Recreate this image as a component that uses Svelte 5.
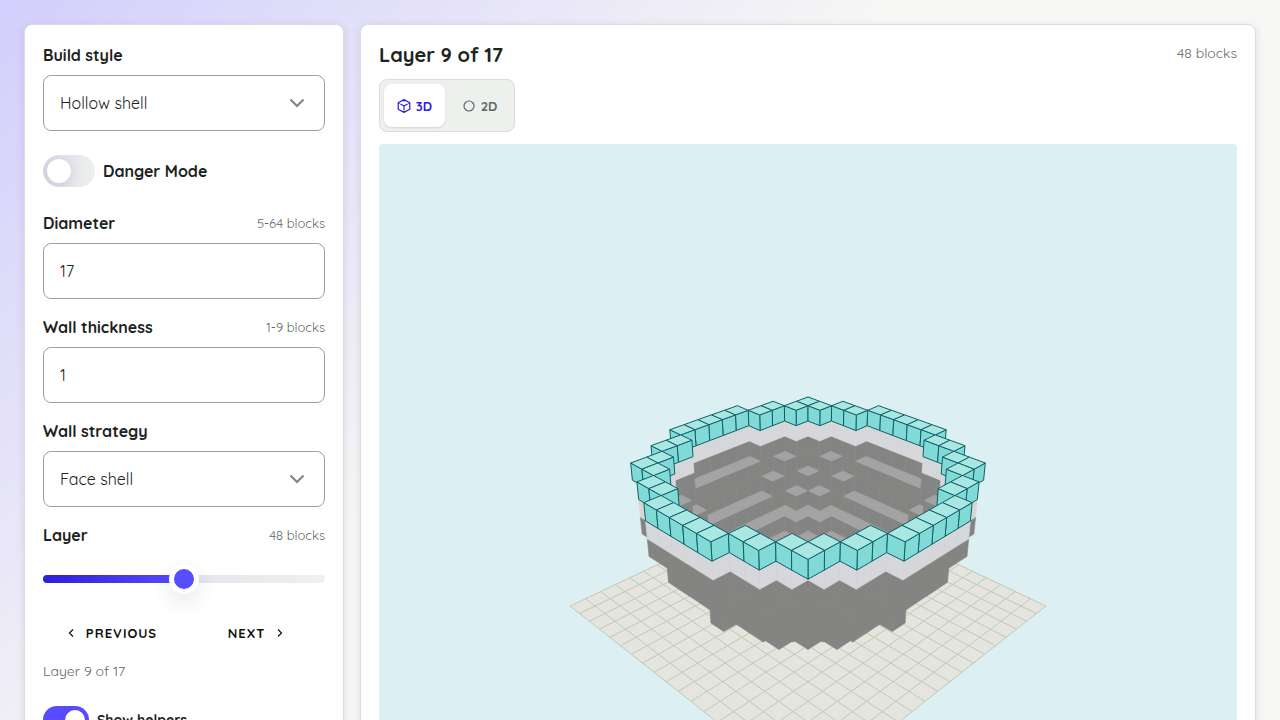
<script lang="ts">
  type Point = [number, number];
  interface Face {
    kind: string;
    points: string;
  }

  let buildStyle = $state('Hollow shell');
  let strategy = $state('Face shell');
  let danger = $state(false);
  let helpers = $state(true);
  let diameter = $state(17);
  let thickness = $state(1);
  let layer = $state(9);
  let view = $state('3D');

  // camera for the preview, in block units around the sphere centre
  const focal = 855;
  const distance = 44.29;
  const pitch = 0.4568;
  const center: Point = [429, 318];

  let radius = $derived(diameter / 2);
  let fill = $derived(((layer - 1) / (diameter - 1)) * 100);

  function project(x: number, y: number, z: number): Point {
    const u = (x - z) * Math.SQRT1_2;
    const w = -(x + z) * Math.SQRT1_2;
    const h = y - 0.56;
    const depth = distance + w * Math.cos(pitch) - h * Math.sin(pitch);
    return [
      center[0] + (focal * u) / depth,
      center[1] - (focal * (w * Math.sin(pitch) + h * Math.cos(pitch))) / depth
    ];
  }

  function toPoints(corners: number[][]) {
    return corners
      .map(([x, y, z]) => project(x, y, z).map((v) => v.toFixed(1)).join(','))
      .join(' ');
  }

  function inside(x: number, y: number, z: number) {
    return x * x + y * y + z * z <= radius * radius;
  }

  function isShell(x: number, y: number, z: number) {
    if (!inside(x, y, z)) return false;
    return !(
      inside(x + 1, y, z) && inside(x - 1, y, z) &&
      inside(x, y + 1, z) && inside(x, y - 1, z) &&
      inside(x, y, z + 1) && inside(x, y, z - 1)
    );
  }

  let half = $derived(Math.floor(radius));
  let top = $derived(layer - 1 - half);

  let blocks = $derived.by(() => {
    let count = 0;
    for (let x = -half; x <= half; x++)
      for (let z = -half; z <= half; z++) if (isShell(x, top, z)) count++;
    return count;
  });

  // back to front, bottom to top, so later faces cover earlier ones
  let faces = $derived.by(() => {
    const list: Face[] = [];
    for (let y = -half; y <= top; y++) {
      const kind = y === top ? 'current' : y === top - 1 ? 'recent' : 'old';
      for (let x = -half; x <= half; x++) {
        for (let z = -half; z <= half; z++) {
          if (!isShell(x, y, z)) continue;
          const [x0, x1, y0, y1, z0, z1] = [x - 0.5, x + 0.5, y - 0.5, y + 0.5, z - 0.5, z + 0.5];
          if (!isShell(x + 1, y, z))
            list.push({ kind: `${kind} side`, points: toPoints([[x1, y0, z0], [x1, y0, z1], [x1, y1, z1], [x1, y1, z0]]) });
          if (!isShell(x, y, z + 1))
            list.push({ kind: `${kind} side`, points: toPoints([[x0, y0, z1], [x1, y0, z1], [x1, y1, z1], [x0, y1, z1]]) });
          if (y === top || !isShell(x, y + 1, z))
            list.push({ kind: `${kind} top`, points: toPoints([[x0, y1, z0], [x1, y1, z0], [x1, y1, z1], [x0, y1, z1]]) });
        }
      }
    }
    return list;
  });

  let edge = $derived(radius + 1);
  let ground = $derived(toPoints([[-edge, -radius, -edge], [edge, -radius, -edge], [edge, -radius, edge], [-edge, -radius, edge]]));
  let gridLines = $derived.by(() => {
    const lines: string[] = [];
    for (let i = -edge; i <= edge; i++) {
      lines.push(toPoints([[i, -radius, -edge], [i, -radius, edge]]));
      lines.push(toPoints([[-edge, -radius, i], [edge, -radius, i]]));
    }
    return lines;
  });
</script>

<main class="page">
  <form class="panel controls">
    <div class="field">
      <label for="build-style">Build style</label>
      <div class="select">
        <select id="build-style" bind:value={buildStyle}>
          <option>Hollow shell</option>
          <option>Solid</option>
        </select>
        <svg class="chevron" viewBox="0 0 16 10" aria-hidden="true"><path d="M1.500 1.500 8 8l6.500-6.500" /></svg>
      </div>
    </div>

    <label class="switch danger">
      <input type="checkbox" bind:checked={danger} />
      <span>Danger Mode</span>
    </label>

    <div class="field">
      <div class="label-row">
        <label for="diameter">Diameter</label>
        <span class="hint">5-64 blocks</span>
      </div>
      <input class="box" id="diameter" type="text" inputmode="numeric" bind:value={diameter} />
    </div>

    <div class="field">
      <div class="label-row">
        <label for="thickness">Wall thickness</label>
        <span class="hint">1-9 blocks</span>
      </div>
      <input class="box" id="thickness" type="text" inputmode="numeric" bind:value={thickness} />
    </div>

    <div class="field">
      <label for="strategy">Wall strategy</label>
      <div class="select">
        <select id="strategy" bind:value={strategy}>
          <option>Face shell</option>
          <option>Full shell</option>
        </select>
        <svg class="chevron" viewBox="0 0 16 10" aria-hidden="true"><path d="M1.500 1.500 8 8l6.500-6.500" /></svg>
      </div>
    </div>

    <div class="field">
      <div class="label-row">
        <label for="layer">Layer</label>
        <span class="hint">{blocks} blocks</span>
      </div>
      <input class="slider" id="layer" type="range" min="1" max={diameter} bind:value={layer} style="--fill: {fill}%" />
    </div>

    <div class="steps">
      <button type="button" onclick={() => (layer = Math.max(1, layer - 1))}>
        <svg viewBox="0 0 6 10" aria-hidden="true"><path d="M5 1.500 1.500 5 5 8.500" /></svg>
        Previous
      </button>
      <button type="button" onclick={() => (layer = Math.min(diameter, layer + 1))}>
        Next
        <svg viewBox="0 0 6 10" aria-hidden="true"><path d="M1 1.500 4.500 5 1 8.500" /></svg>
      </button>
    </div>

    <p class="status">Layer {layer} of {diameter}</p>

    <label class="switch helpers">
      <input type="checkbox" bind:checked={helpers} />
      <span>Show helpers</span>
    </label>
  </form>

  <section class="panel preview">
    <header>
      <h1>Layer {layer} of {diameter}</h1>
      <span class="count">{blocks} blocks</span>
    </header>

    <div class="tabs">
      <button type="button" class:active={view === '3D'} onclick={() => (view = '3D')}>
        <svg viewBox="0 0 14 14" aria-hidden="true">
          <path d="M7 .6 12.800 3.800v6.400L7 13.400 1.200 10.200V3.800zM3.400 5 7 7l3.600-2M7 7v4M7 .6v1.800M1.200 3.800l1.400.8M12.800 3.800l-1.400.8M7 13.400v-1.600" />
        </svg>
        3D
      </button>
      <button type="button" class:active={view === '2D'} onclick={() => (view = '2D')}>
        <svg viewBox="0 0 14 14" aria-hidden="true"><circle cx="7" cy="7" r="5" /></svg>
        2D
      </button>
    </div>

    <svg class="scene" viewBox="0 0 858 722" preserveAspectRatio="xMidYMid slice" role="img" aria-label="Sphere preview">
      <polygon class="ground" points={ground} />
      {#each gridLines as points}
        <polyline class="grid" {points} />
      {/each}
      {#each faces as face}
        <polygon class={face.kind} points={face.points} />
      {/each}
    </svg>
  </section>
</main>

<style>
  :global(body) {
    background: linear-gradient(135deg, #d3cefc, #f7f7f5 640px);
  }

  .page {
    display: grid;
    grid-template-columns: 320px minmax(0, 1fr);
    align-items: start;
    gap: 16px;
    padding: 24px;
    font-family: Quicksand, Lato, sans-serif;
    font-size: 16px;
    line-height: 24px;
    color: #1c2321;
  }

  .panel {
    padding: 18px;
    background: #fff;
    border: 1px solid #d9dddb;
    border-radius: 8px;
    box-shadow: 0 2px 8px rgba(30, 35, 50, 0.1);
  }

  .controls {
    display: flex;
    flex-direction: column;
    gap: 16px;
  }

  .field {
    display: flex;
    flex-direction: column;
    gap: 8px;
  }

  .field label,
  .danger {
    font-weight: 700;
  }

  .label-row,
  header {
    display: flex;
    justify-content: space-between;
  }

  .hint {
    font-size: 13px;
    color: #5f6a67;
  }

  .select {
    display: grid;
    align-items: center;
  }

  .select > * {
    grid-area: 1 / 1;
  }

  select,
  .box {
    box-sizing: border-box;
    width: 100%;
    height: 56px;
    margin: 0;
    padding: 0 16px;
    appearance: none;
    background: #fff;
    border: 1px solid #97a19e;
    border-radius: 8px;
    color: #1c2321;
    font: inherit;
  }

  .chevron {
    justify-self: end;
    width: 16px;
    height: 10px;
    margin-right: 20px;
    pointer-events: none;
  }

  .chevron path {
    fill: none;
    stroke: #7b8784;
    stroke-width: 2;
  }

  .switch {
    display: flex;
    align-items: center;
    gap: 8px;
  }

  .danger {
    margin: 8px 0;
  }

  .switch input {
    display: flex;
    align-items: center;
    width: 52px;
    height: 32px;
    margin: 0;
    padding: 4px;
    box-sizing: border-box;
    appearance: none;
    overflow: hidden;
    background: linear-gradient(90deg, #d8d8ea, #eef1ee);
    border-radius: 16px;
  }

  .switch input::before {
    content: '';
    width: 24px;
    height: 24px;
    border-radius: 50%;
    background: #fff;
    box-shadow: 0 2px 8px rgba(40, 40, 90, 0.12);
  }

  .switch input:checked {
    justify-content: flex-end;
    background: #584cff;
  }

  .helpers {
    margin-top: 7px;
    font-size: 14px;
    font-weight: 700;
  }

  .helpers input {
    width: 46px;
    height: 28px;
  }

  .helpers input::before {
    width: 20px;
    height: 20px;
  }

  .slider {
    width: 100%;
    height: 48px;
    margin: 0;
    appearance: none;
    background: none;
  }

  .slider::-webkit-slider-runnable-track {
    height: 8px;
    border-radius: 4px;
    background:
      linear-gradient(90deg, #2b20d8, #584cff) 0 0 / var(--fill) 100% no-repeat,
      linear-gradient(90deg, #d8d8ea, #eef1ee);
  }

  .slider::-webkit-slider-thumb {
    box-sizing: border-box;
    width: 30px;
    height: 30px;
    margin-top: -11px;
    appearance: none;
    background: #584cff;
    border: 5px solid #fff;
    border-radius: 50%;
    box-shadow: 0 8px 20px rgba(30, 35, 50, 0.1);
  }

  .steps {
    display: grid;
    grid-template-columns: 1fr 1fr;
    gap: 4px;
    margin-top: -4px;
  }

  .steps button {
    display: flex;
    align-items: center;
    justify-content: center;
    gap: 12px;
    height: 36px;
    padding: 0;
    background: none;
    border: 0;
    color: #0f1110;
    font: inherit;
    font-size: 13px;
    font-weight: 700;
    letter-spacing: 1px;
    text-transform: uppercase;
  }

  .steps svg {
    width: 6px;
    height: 10px;
    fill: none;
    stroke: currentColor;
    stroke-width: 1.2;
  }

  .status {
    margin: -8px 0 0;
    font-size: 14px;
    color: #5f6a67;
  }

  .preview {
    display: flex;
    flex-direction: column;
    gap: 12px;
  }

  h1 {
    margin: 0;
    font-size: 20px;
    font-weight: 700;
  }

  .count {
    font-size: 14px;
    line-height: 20px;
    color: #5f6a67;
  }

  .tabs {
    display: flex;
    align-self: flex-start;
    gap: 4px;
    padding: 4px;
    background: #edf0ed;
    border: 1px solid #d9dddb;
    border-radius: 8px;
  }

  .tabs button {
    display: flex;
    align-items: center;
    justify-content: center;
    gap: 5px;
    width: 61px;
    height: 43px;
    padding: 0;
    background: none;
    border: 0;
    border-radius: 8px;
    color: #5f6a67;
    font: inherit;
    font-size: 13px;
    font-weight: 700;
  }

  .tabs .active {
    background: #fff;
    color: #2b20d8;
    box-shadow: 0 1px 2px rgba(30, 35, 50, 0.12);
  }

  .tabs svg {
    width: 14px;
    height: 14px;
    fill: none;
    stroke: currentColor;
    stroke-width: 1.2;
    stroke-linejoin: round;
  }

  .scene {
    width: 100%;
    height: 722px;
    background: #dceff2;
    border-radius: 4px;
  }

  .scene polygon {
    stroke-linejoin: round;
  }

  .ground {
    fill: #e5e4df;
  }

  .grid {
    fill: none;
    stroke: #bccbb6;
  }

  .scene .old {
    fill: #848482;
    stroke: #848482;
    stroke-width: 0.6;
  }

  .scene .old.top {
    fill: #a3a3a3;
    stroke: #9c9c9c;
    stroke-width: 0.4;
  }

  .scene .recent {
    fill: #d6d7da;
    stroke: #d6d7da;
    stroke-width: 0.6;
  }

  .scene .current {
    fill: #81dad6;
    stroke: #0f6168;
  }

  .scene .current.top {
    fill: #a9e7e3;
  }
</style>
